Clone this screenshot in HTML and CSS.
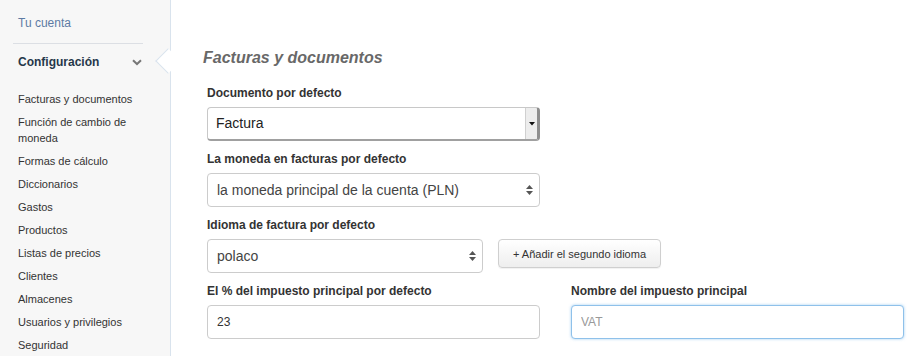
FILE: index.html
```html
<!DOCTYPE html>
<html lang="es">
<head>
<meta charset="utf-8">
<title>Facturas y documentos</title>
<link rel="stylesheet" href="styles.css">
</head>
<body>
<div class="page">
  <aside class="sidebar">
    <nav class="nav">
      <a class="nav-top" href="#">Tu cuenta</a>
      <div class="nav-section">
        <span>Configuración</span>
        <svg class="chev" width="10" height="7" viewBox="0 0 10 7"><polyline points="1,1.2 5,5 9,1.2" fill="none" stroke="#777" stroke-width="2"/></svg>
      </div>
      <ul class="sub">
        <li>Facturas y documentos</li>
        <li>Función de cambio de moneda</li>
        <li>Formas de cálculo</li>
        <li>Diccionarios</li>
        <li>Gastos</li>
        <li>Productos</li>
        <li>Listas de precios</li>
        <li>Clientes</li>
        <li>Almacenes</li>
        <li>Usuarios y privilegios</li>
        <li>Seguridad</li>
      </ul>
    </nav>
  </aside>
  <main class="main">
    <div class="notch"></div>
    <h2 class="title">Facturas y documentos</h2>
    <div class="form">
      <div class="group col">
        <label class="lbl">Documento por defecto</label>
        <div class="menulist">
          <span class="ml-text">Factura</span>
          <span class="ml-btn"><svg width="6" height="4" viewBox="0 0 6 4"><polygon points="0,0 6,0 3,3.5" fill="#111"/></svg></span>
        </div>
      </div>
      <div class="group col">
        <label class="lbl">La moneda en facturas por defecto</label>
        <div class="select">
          <span>la moneda principal de la cuenta (PLN)</span>
          <svg class="updown" width="7" height="10" viewBox="0 0 7 10"><polygon points="3.5,0 7,4 0,4" fill="#555"/><polygon points="0,6 7,6 3.5,10" fill="#555"/></svg>
        </div>
      </div>
      <div class="group">
        <label class="lbl">Idioma de factura por defecto</label>
        <div class="inline">
          <div class="select narrow">
            <span>polaco</span>
            <svg class="updown" width="7" height="10" viewBox="0 0 7 10"><polygon points="3.5,0 7,4 0,4" fill="#555"/><polygon points="0,6 7,6 3.5,10" fill="#555"/></svg>
          </div>
          <button class="btn" type="button">+ Añadir el segundo idioma</button>
        </div>
      </div>
      <div class="cols">
        <div class="group col">
          <label class="lbl">El % del impuesto principal por defecto</label>
          <input class="input" type="text" value="23">
        </div>
        <div class="group col">
          <label class="lbl">Nombre del impuesto principal</label>
          <input class="input focus" type="text" placeholder="VAT">
        </div>
      </div>
    </div>
  </main>
</div>
</body>
</html>
```
FILE: styles.css
```css
* { box-sizing: border-box; }
html, body { margin: 0; padding: 0; background: #fff; }
body { font-family: "Liberation Sans", Arial, sans-serif; color: #333; }
.page { display: flex; min-height: 356px; height: 356px; overflow: hidden; }
.sidebar {
  width: 171px;
  flex: 0 0 171px;
  background: #f7f7f7;
  border-right: 1px solid #d9e3ed;
}
.nav { padding: 0 27px 0 13px; }
.nav-top {
  display: block;
  padding: 15px 5px 12px;
  line-height: 16px;
  font-size: 12px;
  color: #5d7ba4;
  text-decoration: none;
  border-bottom: 1px solid #dcdfe4;
}
.nav-section {
  display: flex;
  align-items: center;
  justify-content: space-between;
  padding: 10px 1px 8px 5px;
  line-height: 16px;
  font-size: 12px;
  font-weight: bold;
  color: #26374a;
}
.chev { display: block; }
.sub { list-style: none; margin: 0; padding: 10px 0 0; }
.sub li {
  padding: 3px 5px 4px;
  line-height: 16px;
  font-size: 11px;
  color: #333;
}
.main { position: relative; flex: 1; padding: 48px 0 0 32px; }
.notch {
  position: absolute;
  left: -12px;
  top: 52px;
  width: 18px;
  height: 18px;
  background: #fff;
  border-left: 1px solid #d9e3ed;
  border-bottom: 1px solid #d9e3ed;
  transform: rotate(45deg);
}
.title {
  margin: 0 0 17px;
  font-size: 16px;
  line-height: 20px;
  font-weight: bold;
  font-style: italic;
  color: #686868;
}
.form { margin-left: 4px; width: 697px; }
.group { margin-bottom: 10px; }
.col { width: 333px; }
.lbl {
  display: block;
  margin-bottom: 5px;
  line-height: 17px;
  font-size: 12px;
  font-weight: bold;
  color: #333;
}
.menulist {
  display: flex;
  height: 34px;
  border: 1px solid #c8c8c8;
  border-right: 3px solid #8e8e8e;
  border-bottom: 2px solid #a0a0a0;
  border-radius: 4px;
  background: #fff;
  overflow: hidden;
}
.ml-text { flex: 1; padding-left: 8px; line-height: 31px; font-size: 14px; color: #222; }
.ml-btn {
  width: 12px;
  display: flex;
  align-items: center;
  justify-content: center;
  background: #ededed;
  border-left: 1px solid #d0d0d0;
}
.ml-btn svg { display: block; margin-top: 1px; }
.select {
  display: flex;
  align-items: center;
  justify-content: space-between;
  height: 34px;
  padding: 0 6px 0 9px;
  border: 1px solid #ccc;
  border-radius: 4px;
  background: #fff;
  font-size: 14px;
  color: #444;
}
.updown { display: block; }
.inline { display: flex; align-items: flex-start; gap: 15px; }
.narrow { width: 276px; }
.btn {
  height: 29px;
  padding: 0 14px;
  border: 1px solid #cfcfcf;
  border-radius: 4px;
  background: linear-gradient(#ffffff, #eeeeee);
  box-shadow: 0 1px 1px rgba(0,0,0,0.06);
  font-family: "Liberation Sans", Arial, sans-serif;
  font-size: 11px;
  color: #333;
}
.cols { display: flex; gap: 31px; }
.input {
  display: block;
  width: 100%;
  height: 34px;
  padding: 0 9px;
  border: 1px solid #ccc;
  border-radius: 4px;
  background: #fff;
  font-family: "Liberation Sans", Arial, sans-serif;
  font-size: 12px;
  color: #333;
  outline: none;
}
.input.focus {
  border-color: #8fc1ea;
  box-shadow: 0 0 3px rgba(102, 175, 233, 0.6);
}
.input::placeholder { color: #999; }
```
